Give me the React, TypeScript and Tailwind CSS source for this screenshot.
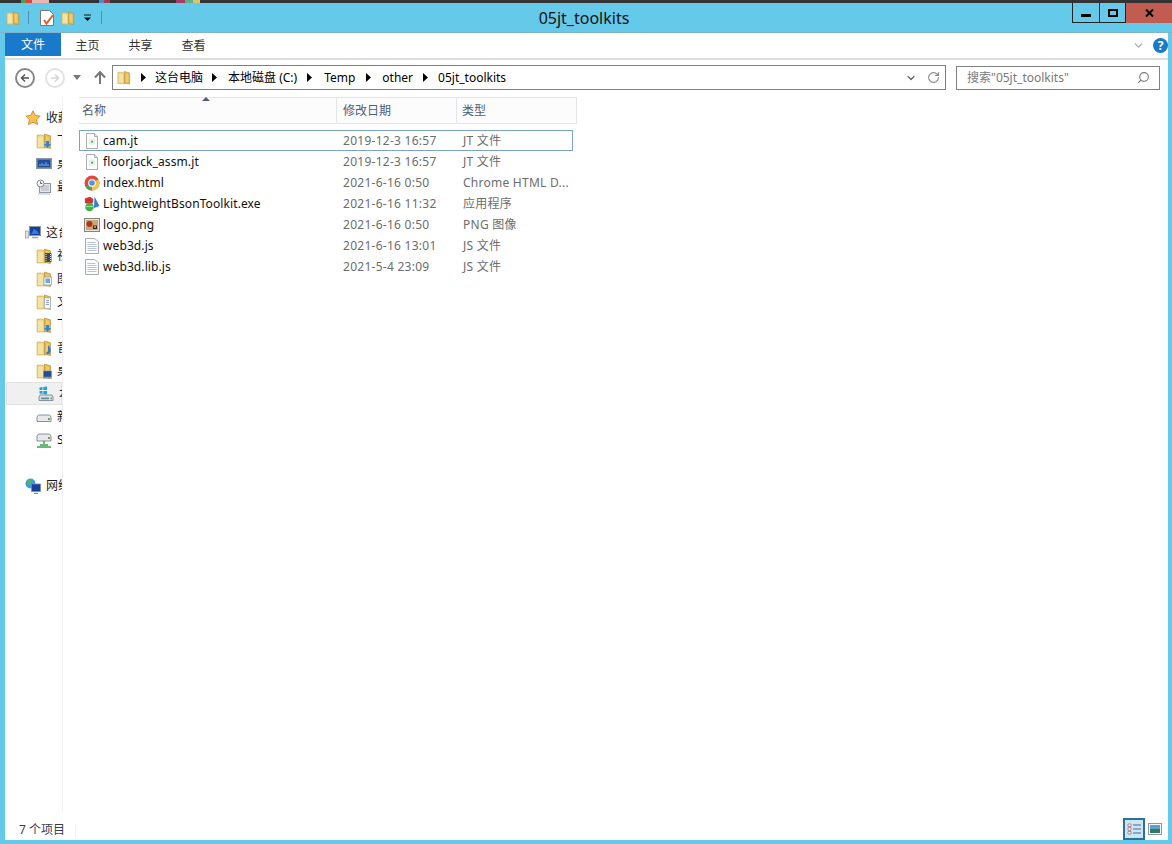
import { FC, ReactNode } from "react";
import { ChevronDown, RotateCw, Search } from "lucide-react";

// Explorer folder, drawn as a tall open folder seen from the side
const Folder: FC<{ className?: string; children?: ReactNode }> = ({ className, children }) => (
  <svg viewBox="0 0 16 16" className={className ?? "w-4 h-4 shrink-0"}>
    <path d="M1 2h6l1 1h1.500v12H1z" fill="#eccf7c" stroke="#d0ae5a" strokeWidth="0.6" />
    <path d="M2 3.500h5v10.500H2z" fill="#f5e2a5" />
    <path d="M8.500 1l6 1.800v12.700l-6-1z" fill="#e4b94c" stroke="#b08c38" strokeWidth="0.6" />
    <path d="M10 3l3 1v9.500l-3-.6z" fill="#efcb6c" />
    {children}
  </svg>
);

const NavIcon: FC<{ kind: string }> = ({ kind }) => {
  if (kind === "star")
    return (
      <svg viewBox="0 0 16 16" className="w-4 h-4 shrink-0">
        <path d="M8 .8l2.200 4.600 5 .7-3.600 3.500.9 5L8 12.200l-4.500 2.400.9-5L.8 6.100l5-.7z" fill="#fbc04e" stroke="#d9822b" strokeWidth="0.9" />
      </svg>
    );
  if (kind === "download")
    return (
      <Folder>
        <path d="M10 8h3v3h2l-3.500 4L8 11h2z" fill="#2f86d8" />
      </Folder>
    );
  if (kind === "desktop")
    return (
      <svg viewBox="0 0 16 16" className="w-4 h-4 shrink-0">
        <rect x="0.500" y="2.500" width="15" height="10" fill="#5e7da6" stroke="#8a96a6" />
        <rect x="2" y="4" width="12" height="7" fill="#1f4f96" />
        <path d="M4 10V8M6 10V7M8 10V8M10 10V6M12 10V8" stroke="#7eb0e6" />
      </svg>
    );
  if (kind === "recent")
    return (
      <svg viewBox="0 0 16 16" className="w-4 h-4 shrink-0">
        <rect x="3.500" y="4.500" width="11" height="9" fill="#e4e9ee" stroke="#8d97a1" />
        <path d="M5 7h8M5 9h8M5 11h8" stroke="#a9b3bc" />
        <circle cx="4.500" cy="4.500" r="3.500" fill="#f5f7f8" stroke="#7f8a94" />
        <path d="M4.500 2.500v2h1.800" stroke="#556666" fill="none" />
        <path d="M2 15h12" stroke="#b6bdc4" />
      </svg>
    );
  if (kind === "pc")
    return (
      <svg viewBox="0 0 16 16" className="w-4 h-4 shrink-0">
        <rect x="0.500" y="6" width="3" height="7" fill="#dfe4e8" stroke="#7f8a94" strokeWidth="0.6" />
        <rect x="4.500" y="1.500" width="11" height="9" fill="#1c3f9c" stroke="#8b97a5" />
        <path d="M6 9l3-5 3 2 2 3z" fill="#2f7fe0" />
        <path d="M7 12.500h6" stroke="#9aa5b1" strokeWidth="1.500" />
      </svg>
    );
  if (kind === "video")
    return (
      <Folder>
        <rect x="9" y="5" width="6.500" height="9" fill="#3b4a55" />
        <path d="M10 6v7M14.500 6v7" stroke="#dfe6ea" strokeDasharray="1 1" />
      </Folder>
    );
  if (kind === "image")
    return (
      <Folder>
        <rect x="8" y="6" width="7.500" height="8" fill="#f4f6f8" stroke="#8d97a1" strokeWidth="0.7" />
        <rect x="9.500" y="7.500" width="4.500" height="4.500" fill="#6fa9cf" />
      </Folder>
    );
  if (kind === "doc")
    return (
      <Folder>
        <rect x="8.500" y="4" width="6" height="10.500" fill="#f7f8f9" stroke="#a3adb6" strokeWidth="0.7" />
        <path d="M10 6.500h3M10 8.500h3M10 10.500h3" stroke="#8ba6c4" />
      </Folder>
    );
  if (kind === "music")
    return (
      <Folder>
        <path d="M12 5c2 2 3 4 2.500 6.500-.3 1.800-2 3-3.500 2.500-1.200-.4-1-2 .2-2.300l.8-.2z" fill="#2f7fd0" />
      </Folder>
    );
  if (kind === "desktop2")
    return (
      <Folder>
        <rect x="7.500" y="8" width="8" height="6" fill="#1f4f96" stroke="#7f8a94" strokeWidth="0.6" />
        <path d="M7 15h9" stroke="#7f8a94" />
      </Folder>
    );
  if (kind === "system")
    return (
      <svg viewBox="0 0 16 16" className="w-4 h-4 shrink-0">
        <path d="M1.500 1.500l3-.4v3h-3zM5.300 1l3.700-.5v3.600H5.300zM1.500 4.900h3v3l-3-.4zM5.300 4.900H9v3.500l-3.700-.5z" fill="#19a3e8" />
        <path d="M1 11l1-2h12l1 2v3.500H1z" fill="#dfe3e6" stroke="#6f7a84" strokeWidth="0.8" />
        <rect x="3" y="11.500" width="8" height="1.800" fill="#5d8f9c" />
        <rect x="12.500" y="11.500" width="1.500" height="1.800" fill="#66a64a" />
      </svg>
    );
  if (kind === "drive")
    return (
      <svg viewBox="0 0 16 16" className="w-4 h-4 shrink-0">
        <path d="M1 8l1.500-2h11L15 8v4.500H1z" fill="#e6e8ea" stroke="#6f7a84" strokeWidth="0.8" />
        <rect x="12" y="9" width="1.800" height="2" fill="#6a9a50" />
      </svg>
    );
  if (kind === "net-drive")
    return (
      <svg viewBox="0 0 16 16" className="w-4 h-4 shrink-0">
        <path d="M1 4l1.500-2h11L15 4v5H1z" fill="#e6e8ea" stroke="#6f7a84" strokeWidth="0.8" />
        <rect x="12" y="5" width="1.800" height="2" fill="#6a9a50" />
        <path d="M8 9v3M4 13h8M1 15h14" stroke="#3aa04a" strokeWidth="1.400" />
      </svg>
    );
  return (
    <svg viewBox="0 0 16 16" className="w-4 h-4 shrink-0">
      <circle cx="5.500" cy="5.500" r="5" fill="#3aa0dc" />
      <path d="M2.500 3l3-1.500 1 3-3 2zM6 8l2-1 1 2-2 1z" fill="#59b84a" />
      <rect x="6.500" y="6" width="9" height="7.500" fill="#1c3f9c" stroke="#7f8a94" strokeWidth="0.7" />
      <path d="M9 15.500h4" stroke="#7f8a94" strokeWidth="1.400" />
    </svg>
  );
};

const FileIcon: FC<{ kind: string }> = ({ kind }) => {
  if (kind === "jt")
    return (
      <svg viewBox="0 0 16 16" className="w-4 h-4">
        <path d="M2.500.5h8l3 3v12h-11z" fill="#fbfcfc" stroke="#a8adb2" />
        <path d="M10.500.5v3h3" fill="#e7eaec" stroke="#a8adb2" />
        <rect x="5.500" y="6" width="5" height="5" fill="#f2f6ef" stroke="#d4dcd0" strokeWidth="0.5" />
        <rect x="7.200" y="7.700" width="1.800" height="1.800" fill="#2f9d4a" />
      </svg>
    );
  if (kind === "chrome")
    return (
      <svg viewBox="0 0 16 16" className="w-4 h-4">
        <circle cx="8" cy="8" r="7.500" fill="#e2483d" />
        <path d="M8 8L1.500 11.700A7.500 7.500 0 0 0 8 15.500z" fill="#4aa657" />
        <path d="M8 8l6.500-3.700A7.500 7.500 0 0 1 8 15.500z" fill="#f0c64a" />
        <circle cx="8" cy="8" r="3.900" fill="#f4f4f4" />
        <circle cx="8" cy="8" r="2.800" fill="#5b93d8" />
      </svg>
    );
  if (kind === "exe")
    return (
      <svg viewBox="0 0 16 16" className="w-4 h-4">
        <path d="M10.500.5l5 9.500-5.500 2z" fill="#2f7fe0" />
        <path d="M.8 2.500L6 .8l3.500 2.500-1 4.500-7.500-.5z" fill="#d5322c" />
        <circle cx="5.500" cy="11" r="4.300" fill="#3fb04a" />
        <path d="M1.500 10.500h8" stroke="#8fdc86" strokeWidth="1.200" />
      </svg>
    );
  if (kind === "png")
    return (
      <svg viewBox="0 0 16 16" className="w-4 h-4">
        <rect x="0.500" y="1.500" width="15" height="13" fill="#e6e4e0" stroke="#7d848b" />
        <rect x="2" y="3" width="12" height="10" fill="#c9a877" />
        <circle cx="5.500" cy="7" r="3" fill="#b0311f" />
        <rect x="9" y="8.500" width="4" height="3.500" fill="#33261a" />
        <circle cx="11" cy="10" r="1" fill="#f2b632" />
      </svg>
    );
  return (
    <svg viewBox="0 0 16 16" className="w-4 h-4">
      <path d="M1.500.5h9l4 3v12h-13z" fill="#fbfcfd" stroke="#a8adb2" />
      <path d="M3.500 4.500h8M3.500 6.500h9M3.500 8.500h9M3.500 10.500h9M3.500 12.500h9" stroke="#b7c3cd" />
    </svg>
  );
};

// Black breadcrumb separator
const Crumb: FC<{ className: string }> = ({ className }) => (
  <svg viewBox="0 0 5 9" className={`${className} w-[5px] h-[9px] shrink-0`}>
    <path d="M0 0l5 4.500L0 9z" fill="#000" />
  </svg>
);

const navItems = [
  { icon: "star", label: "收藏夹", top: true },
  { icon: "download", label: "下载" },
  { icon: "desktop", label: "桌面" },
  { icon: "recent", label: "最近访问的位置", gapAfter: true },
  { icon: "pc", label: "这台电脑", top: true },
  { icon: "video", label: "视频" },
  { icon: "image", label: "图片" },
  { icon: "doc", label: "文档" },
  { icon: "download", label: "下载" },
  { icon: "music", label: "音乐" },
  { icon: "desktop2", label: "桌面" },
  { icon: "system", label: "本地磁盘 (C:)", selected: true },
  { icon: "drive", label: "新加卷 (D:)" },
  { icon: "net-drive", label: "Share (S:)", gapAfter: true },
  { icon: "network", label: "网络", top: true },
];

const files = [
  { icon: "jt", name: "cam.jt", date: "2019-12-3 16:57", type: "JT 文件" },
  { icon: "jt", name: "floorjack_assm.jt", date: "2019-12-3 16:57", type: "JT 文件" },
  { icon: "chrome", name: "index.html", date: "2021-6-16 0:50", type: "Chrome HTML D..." },
  { icon: "exe", name: "LightweightBsonToolkit.exe", date: "2021-6-16 11:32", type: "应用程序" },
  { icon: "png", name: "logo.png", date: "2021-6-16 0:50", type: "PNG 图像" },
  { icon: "txt", name: "web3d.js", date: "2021-6-16 13:01", type: "JS 文件" },
  { icon: "txt", name: "web3d.lib.js", date: "2021-5-4 23:09", type: "JS 文件" },
];

export default function App() {
  return (
    <div className="relative w-[1172px] h-[844px] flex flex-col overflow-hidden bg-[#65c9ea] text-[12px] text-[#1a1a1a] font-['Noto_Sans','Noto_Sans_CJK_SC',sans-serif]">
      {/* Strip of the window behind */}
      <div className="h-[3px] shrink-0 bg-[#333333] flex">
        <div className="ml-[21px] w-[5px] bg-[#4f9a55]" />
        <div className="w-[6px] bg-[#d8453a]" />
        <div className="w-[17px] bg-[#e8b8b0]" />
        <div className="ml-[50px] w-[5px] bg-[#3f8fd8]" />
        <div className="w-[6px] bg-[#a8384a]" />
        <div className="ml-[66px] w-[9px] bg-[#a83a6a]" />
        <div className="w-[8px] bg-[#5fb08a]" />
        <div className="w-[7px] bg-[#d8c46a]" />
      </div>

      {/* Title bar */}
      <div className="h-[30px] shrink-0 relative flex items-center pl-[6px] border-b border-[#7fb4d0]">
        <Folder className="w-[14px] h-[16px]" />
        <div className="ml-[8px] w-px h-[13px] bg-[#4d93ad]" />
        <svg viewBox="0 0 16 16" className="ml-[10px] w-[16px] h-[16px]">
          <path d="M1.500.5h9l4 4v11h-13z" fill="#fff" stroke="#777777" />
          <path d="M5 10l2.500 3.500L14 5" fill="none" stroke="#e0602a" strokeWidth="2" />
        </svg>
        <Folder className="ml-[6px] w-[14px] h-[16px]" />
        <svg viewBox="0 0 9 8" className="ml-[8px] w-[9px] h-[8px]">
          <path d="M1 1h7" stroke="#111111" />
          <path d="M1 3.500h7L4.500 7z" fill="#111111" />
        </svg>
        <div className="ml-[9px] w-px h-[13px] bg-[#4d93ad]" />
        <div className="absolute inset-x-0 top-[5px] text-center text-[16px] leading-[20px] text-[#111111] pr-[4px]">05jt_toolkits</div>
        {/* Window buttons */}
        <div className="absolute top-0 right-0 h-[20px] flex">
          <div className="w-[28px] flex items-center justify-center border border-t-0 border-[#222222]">
            <div className="w-[10px] h-[3px] mt-[6px] bg-black" />
          </div>
          <div className="w-[26px] flex items-center justify-center border-r border-b border-[#222222]">
            <div className="w-[10px] h-[8px] border-2 border-black" />
          </div>
          <div className="w-[46px] flex items-center justify-center bg-[#c25c50] text-black">
            <svg viewBox="0 0 9 8" className="w-[9px] h-[8px]">
              <path d="M1 .5l7 7M8 .5l-7 7" stroke="#000" strokeWidth="2" />
            </svg>
          </div>
        </div>
      </div>

      {/* Window body */}
      <div className="flex-1 min-h-0 ml-[5px] mr-[4px] mb-[4px] bg-white flex flex-col">
        {/* Ribbon tabs */}
        <div className="h-[27px] shrink-0 flex border-b-2 border-[#dcdddd]">
          <div className="w-[56px] h-[23px] bg-[#1979ca] text-white flex items-center justify-center">文件</div>
          <div className="w-[53px] h-[25px] pt-px flex items-center justify-center text-[#333333]">主页</div>
          <div className="w-[53px] h-[25px] pt-px flex items-center justify-center text-[#333333]">共享</div>
          <div className="w-[53px] h-[25px] pt-px flex items-center justify-center text-[#333333]">查看</div>
          <div className="ml-auto h-[25px] flex items-center gap-[8px]">
            <ChevronDown size={13} strokeWidth={2.5} className="text-[#aaaaaa]" />
            <div className="w-[15px] h-[15px] rounded-full bg-[#1979ca] text-white font-bold text-[12px] leading-[15px] text-center">?</div>
          </div>
        </div>

        {/* Address row */}
        <div className="h-[37px] shrink-0 pb-[2px] flex items-center">
          <div className="ml-[10px] w-[20px] h-[20px] rounded-full border-2 border-[#888888] flex items-center justify-center">
            <svg viewBox="0 0 10 10" className="w-[10px] h-[10px]">
              <path d="M9 5H2M5 1.500L1.500 5 5 8.500" fill="none" stroke="#555555" strokeWidth="1.500" />
            </svg>
          </div>
          <div className="ml-[10px] w-[20px] h-[20px] rounded-full border-2 border-[#e2e2e2] flex items-center justify-center">
            <svg viewBox="0 0 10 10" className="w-[10px] h-[10px]">
              <path d="M1 5h7M5 1.500L8.500 5 5 8.500" fill="none" stroke="#d5d5d5" strokeWidth="1.500" />
            </svg>
          </div>
          <svg viewBox="0 0 8 5" className="ml-[8px] w-[8px] h-[5px]">
            <path d="M0 0h8L4 5z" fill="#777777" />
          </svg>
          <svg viewBox="0 0 12 13" className="ml-[13px] w-[12px] h-[13px]">
            <path d="M6 13V2M1 6.500L6 1l5 5.500" fill="none" stroke="#777777" strokeWidth="2" />
          </svg>
          <div className="ml-[6px] w-[834px] h-[25px] border border-[#7f7f7f] flex items-center text-black">
            <Folder className="ml-[4px] w-[14px] h-[17px]" />
            <Crumb className="ml-[10px]" />
            <span className="ml-[9px]">这台电脑</span>
            <Crumb className="ml-[9px]" />
            <span className="ml-[11px]">本地磁盘 (C:)</span>
            <Crumb className="ml-[10px]" />
            <span className="ml-[12px]">Temp</span>
            <Crumb className="ml-[11px]" />
            <span className="ml-[11px]">other</span>
            <Crumb className="ml-[10px]" />
            <span className="ml-[10px]">05jt_toolkits</span>
            <ChevronDown size={12} strokeWidth={2.5} className="ml-auto text-[#666666]" />
            <RotateCw size={13} strokeWidth={2} className="ml-[10px] mr-[5px] text-[#888888]" />
          </div>
          <div className="ml-[10px] w-[204px] h-[24px] border border-[#7f7f7f] flex items-center pl-[10px] pr-[9px] text-[#7a7a7a]">
            <span>搜索"05jt_toolkits"</span>
            <Search size={13} strokeWidth={2} className="ml-auto -scale-x-100 text-[#777777]" />
          </div>
        </div>

        {/* Navigation pane + file list */}
        <div className="flex-1 min-h-0 flex">
          <nav className="w-[58px] shrink-0 overflow-hidden border-r border-[#f1f1f1] pt-[9px]">
            {navItems.map((item, i) => (
              <div
                key={i}
                className={`h-[23px] flex items-center whitespace-nowrap ${item.top ? "pl-[20px]" : "pl-[31px]"} ${item.gapAfter ? "mb-[23px]" : ""} ${
                  item.selected ? "bg-[#f0f0f0] border border-[#e2e2e2] ml-px pl-[30px]" : ""
                }`}
              >
                <NavIcon kind={item.icon} />
                <span className="ml-[5px]">{item.label}</span>
              </div>
            ))}
          </nav>

          <main className="flex-1 min-w-0 pl-[16px] flex flex-col">
            {/* Column headers */}
            <div className="w-[498px] h-[27px] shrink-0 relative flex bg-[#fcfcfc] border-y border-r border-[#e5e5e5] text-[#4c607a]">
              <div className="w-[258px] pl-[3px] flex items-center border-r border-[#e5e5e5]">名称</div>
              <div className="w-[120px] pl-[6px] flex items-center border-r border-[#e5e5e5]">修改日期</div>
              <div className="flex-1 pl-[5px] flex items-center">类型</div>
              <svg viewBox="0 0 8 4" className="absolute left-[123px] -top-px w-[8px] h-[4px]">
                <path d="M4 0l4 4H0z" fill="#4c607a" />
              </svg>
            </div>

            {/* Rows */}
            <div className="pt-[6px] w-[494px]">
              {files.map((f, i) => (
                <div key={f.name} className={`h-[21px] flex items-center border ${i === 0 ? "border-[#7da2ce]" : "border-transparent"}`}>
                  <div className="w-[258px] pl-[4px] flex items-center gap-[3px] text-[#111111]">
                    <FileIcon kind={f.icon} />
                    <span className="whitespace-nowrap tracking-[0.1px]">{f.name}</span>
                  </div>
                  <div className="w-[120px] pl-[5px] text-[#6d6d6d] tracking-[0.27px]">{f.date}</div>
                  <div className="pl-[5px] text-[#6d6d6d] whitespace-nowrap tracking-[0.25px]">{f.type}</div>
                </div>
              ))}
            </div>
          </main>
        </div>

        {/* Status bar */}
        <div className="h-[29px] shrink-0 flex items-end">
          <span className="ml-[14px] mb-[1px] text-[#33405a]">7 个项目</span>
          <div className="ml-[10px] mb-[2px] w-px h-[14px] bg-[#f0f0f0]" />
          <div className="ml-auto mr-[23px] w-[22px] h-[22px] bg-[#c9e6fa] border-2 border-[#2f6f9f] flex items-center justify-center">
            <svg viewBox="0 0 14 12" className="w-[14px] h-[12px]">
              <path d="M1 1h3v2.500H1zM1 4.700h3v2.500H1zM1 8.500h3V11H1z" fill="#fff" stroke="#a05a50" strokeWidth="0.7" />
              <path d="M6 2h8M6 6h8M6 10h8" stroke="#4a6a88" strokeWidth="1.200" />
            </svg>
          </div>
          <svg viewBox="0 0 14 12" className="absolute right-[10px] bottom-[9px] w-[14px] h-[12px]">
            <rect x="0.500" y="0.500" width="13" height="11" fill="#f4f6f8" stroke="#8d97a1" />
            <path d="M2 2h10v4H2z" fill="#5da0d0" />
            <path d="M2 6h10v4H2z" fill="#2f7d5c" />
          </svg>
        </div>
      </div>
    </div>
  );
}
